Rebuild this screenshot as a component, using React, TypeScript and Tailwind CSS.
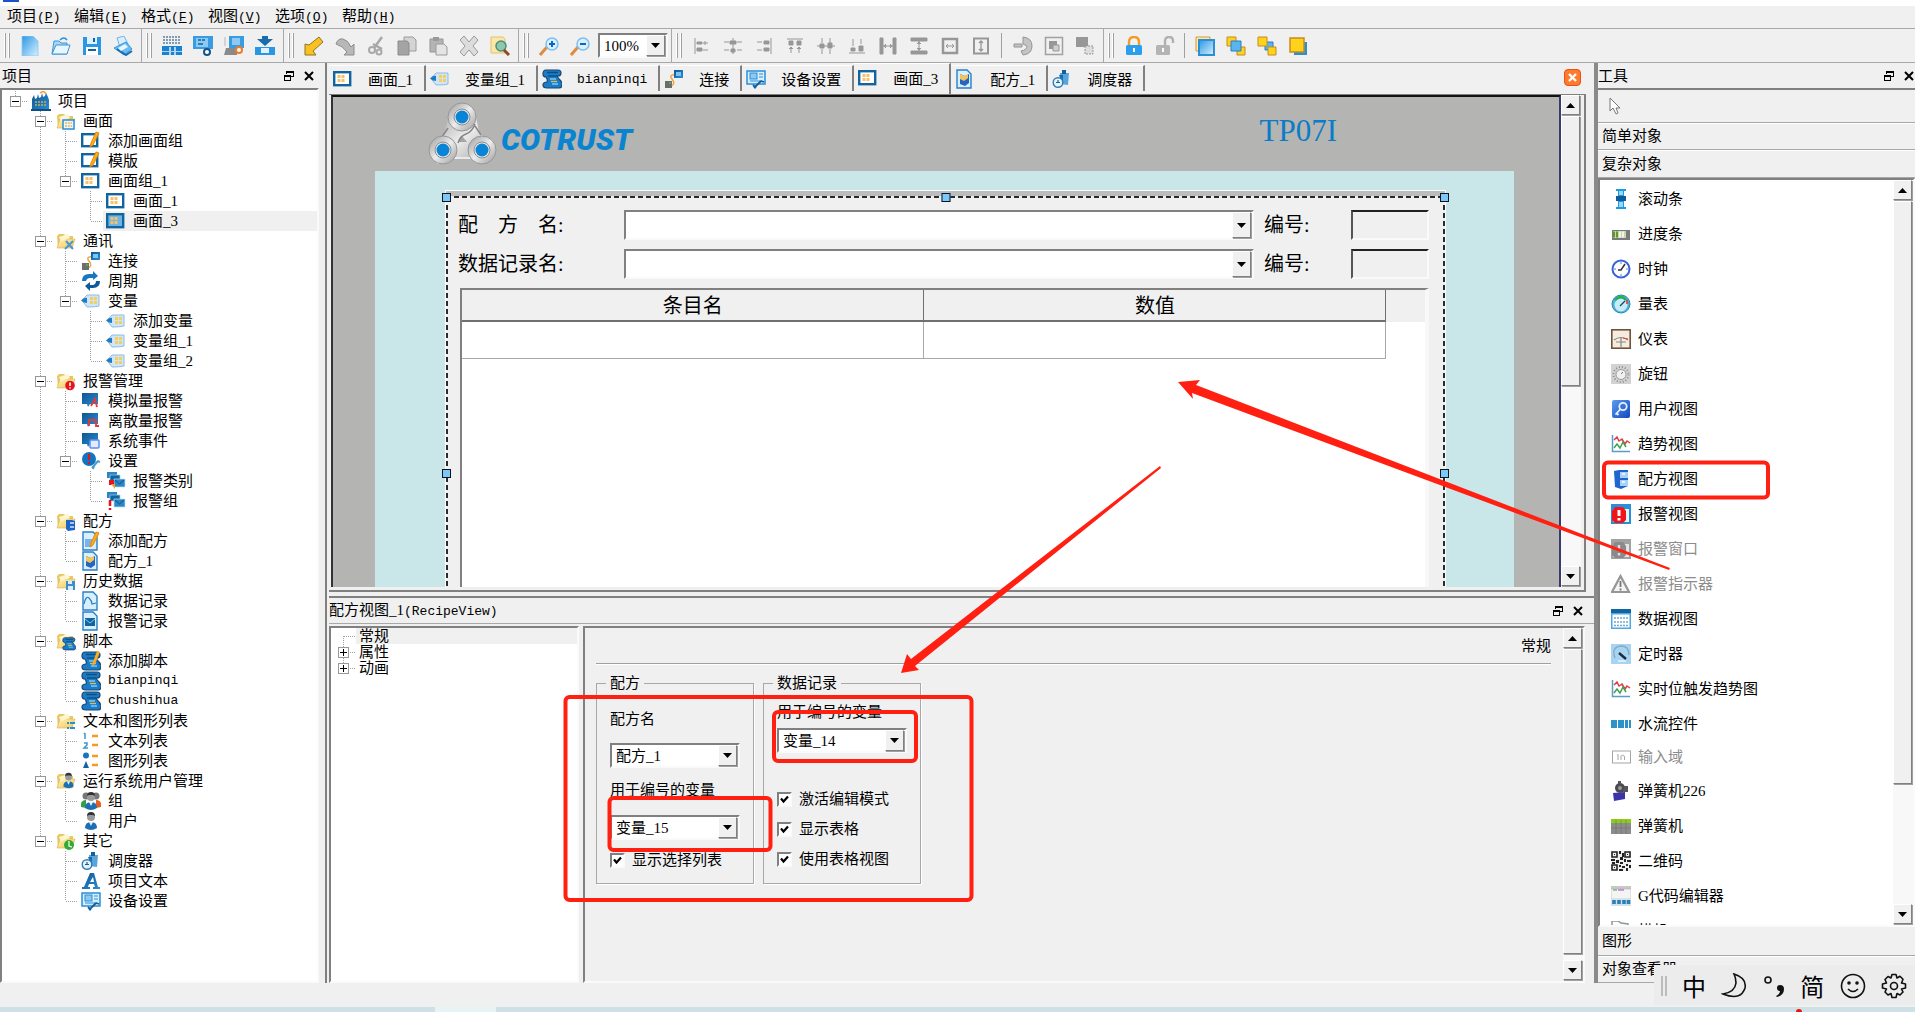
import * as React from 'react';
import clsx from 'clsx';

const RAISED = 'border border-t-white border-l-white border-r-[#808080] border-b-[#808080] bg-[#f0f0f0] shadow-[1px_1px_0_#a0a0a0]';
const SUNKEN = 'border-2 border-t-[#808080] border-l-[#808080] border-r-[#fafafa] border-b-[#fafafa]';

// Shared shapes used inside several icons
const folder = (
  <>
    <path d="M1 5 3 3h5l2 2h7v12H2z" fill="#e8c765" />
    <path d="M1 17 4 8h15l-3 9z" fill="url(#g-yellow)" stroke="#d9b455" strokeWidth=".6" />
    <path d="m3 6 9-3 2 4-9 3z" fill="#fff6cf" />
  </>
);
const pencil = <path d="m15 1 3 1-6 12-3 2 1-4z" fill="#ffab1f" stroke="#e58a00" strokeWidth="1" />;
const screen = (fill: string) => (
  <>
    <rect x="1.2" y="3.2" width="16" height="13" fill={fill} stroke="#1264a0" strokeWidth="2.4" />
    <path d="M4.5 6h3v3h-3zm4 0h3v3h-3zm-4 4h3v3h-3zm4 0h3v3h-3z" fill="#f6c167" />
  </>
);
const page = <path d="M2 1h10l4 4v14H2z" fill="#d8efff" stroke="#2a7fc4" strokeWidth="1.4" />;
const scroll = (
  <>
    <path d="M4 1h12q3 0 3 3t-3 3h-1q1 2 3 4 2 2 2 5 0 3-3 3H5q-4 0-4-3t4-3q1-2-1-5-3 0-3-3 0-4 3-4z" fill="#1a7cc8" stroke="#17466e" strokeWidth="1.2" />
    <path d="M5 3.500h11M6 7h9" stroke="#0f4f80" strokeWidth="1.400" />
    <path d="M8 10h6M10 15h6" stroke="#7fc6f2" strokeWidth="1.300" />
    <path d="M9 12.500h6" stroke="#e0bd52" strokeWidth="1.300" />
  </>
);
const monitor = <path d="M1 2h16v11H9l-2 3-1-3H1z" fill="url(#g-dark)" />;
const person = (
  <>
    <circle cx="10" cy="6" r="4" fill="#9a9a9a" />
    <path d="M6 5q0-4 4-4t4 4l-2-1H8z" fill="#333" />
    <path d="M4 17q0-6 6-6t6 6q-6 4-12 0" fill="#1b70b5" />
    <path d="m8 11 2 4 2-4z" fill="#eee" />
  </>
);
const cards = (
  <>
    <path d="M1 1h10v6H1z" fill="#2b86c6" />
    <path d="M4 4h10v6H4z" fill="#1264a0" stroke="#9fd0f0" strokeWidth=".7" />
    <path d="M8 8h11v8H8z" fill="#2b86c6" stroke="#bfe0f6" strokeWidth=".7" />
    <path d="m9 9 4.500 4L18 9" stroke="#0e4f85" fill="none" />
  </>
);
const trend = (
  <>
    <path d="M1.500 1v16.500H19" stroke="#5a9cc4" strokeWidth="1.500" fill="none" />
    <path d="m3 6 3-3 2 4 3-2 3 5 2-3 3 2" stroke="#e63946" strokeWidth="1.500" fill="none" />
    <path d="m3 14 3-4 3 4 3-6 3 5" stroke="#3fa34d" strokeWidth="1.500" fill="none" />
  </>
);

const ICONS: Record<string, React.ReactNode> = {
  factory: (
    <>
      <path d="M1 19V8l2-4 1 4 2-1 1-4 1 4 2-1 1-4 1 4 2-1 1-3 2 4 1 3v11z" fill="url(#g-dark)" />
      <path d="M9 2q4-3 6 1" stroke="#f29a38" strokeWidth="1.500" fill="none" />
      <path d="M4 11h12M4 14h12" stroke="#c9a95a" strokeWidth="1.500" strokeDasharray="2 1" />
      <path d="M0 18h20v2H0z" fill="#0f4f80" />
    </>
  ),
  folderScreen: (<>{folder}<rect x="7" y="9" width="11" height="9" fill="#eaf6ff" stroke="#2a8fd6" strokeWidth="1.500" /><path d="M9 12h7M9 15h7" stroke="#f0b84e" strokeDasharray="2 .8" strokeWidth="1.500" /></>),
  folderTools: (<>{folder}<path d="m9 18 8-8M10 10l7 8" stroke="#4a97cf" strokeWidth="2" /></>),
  folderAlarm: (<>{folder}<circle cx="14" cy="14.500" r="4.800" fill="#e8131b" /><path d="M14 11.500v3.500M14 16.300v1.200" stroke="#fff" strokeWidth="1.600" /></>),
  folderRecipe: (<>{folder}<path d="M10 9h6l3 1v9l-7 1-2-2z" fill="#1d64c8" /><path d="M14 12h4M14 16h4" stroke="#cfe6ff" strokeWidth="1.500" /></>),
  folderSave: (<>{folder}<path d="M10 10h9v9h-9z" fill="#3b8fd0" /><path d="M12 10h4v3h-4zM12 15h5v4h-5z" fill="#dceefb" /></>),
  folderScript: (<>{folder}<g transform="translate(6 6) scale(.68)">{scroll}</g></>),
  folderList: (<>{folder}<path d="M11 12h2M14 12h5M11 17h2M14 17h5" stroke="#2a8fd6" strokeWidth="1.800" /></>),
  folderUser: (<>{folder}<g transform="translate(4 1) scale(.85)">{person}</g></>),
  folderOther: (<>{folder}<circle cx="13" cy="14" r="5" fill="#34a934" /><path d="M13 10v5l3 1" stroke="#fff" strokeWidth="1.200" fill="none" /></>),
  screenEdit: (<><rect x="1.200" y="3.200" width="15" height="12" fill="#fff" stroke="#1264a0" strokeWidth="2.400" />{pencil}</>),
  screen: screen('#fff'),
  screenActive: screen('#6fb4e6'),
  connect: (
    <>
      <path d="M13 6Q4 5 8 10t-1 7" stroke="#f0a640" strokeWidth="1.500" fill="none" />
      <rect x="10" y="1" width="9" height="8" fill="url(#g-dark)" />
      <rect x="12" y="3" width="5" height="4" fill="#7cc4f2" />
      <rect x="1" y="12" width="7" height="7" fill="#6d6d6d" />
      <path d="M5 14h2" stroke="#4be04b" />
    </>
  ),
  cycle: (
    <>
      <path d="M1 10q0-7 7-7h4V0l5 5-5 4V7H9q-3 0-4 3z" fill="#1a77be" />
      <path d="M19 10q0 7-7 7H9v3l-5-5 5-4v3h3q3-1 3-4z" fill="#0f5a98" />
    </>
  ),
  tag: (
    <>
      <path d="M1 9.500 6 4h12v11q-3 1-12 1z" fill="#cfe5fa" stroke="#8fbbe2" />
      <path d="M0 9.500Q3 6 6 7v5Q3 12 0 9.500z" fill="#1f7dc6" />
      <path d="M9 6h3v3H9zm4 0h3v3h-3zm-4 4h3v3H9zm4 0h3v3h-3z" fill="#f3cf5c" />
    </>
  ),
  alarmAnalog: (<>{monitor}<path d="m10 15 4-7 2 8" stroke="#e23a3a" strokeWidth="1.800" fill="none" /></>),
  alarmDiscrete: (<>{monitor}<path d="M8 15V9h7v6h3" stroke="#e23a3a" strokeWidth="1.800" fill="none" /></>),
  sysEvent: (<>{monitor}<rect x="9" y="9" width="9" height="8" rx="1" fill="#e2ecff" stroke="#5d8df0" strokeWidth="1.500" /></>),
  alarmSettings: (
    <>
      <circle cx="8" cy="8" r="7" fill="#1473bd" />
      <path d="M8 3v6M8 11v2" stroke="#e8131b" strokeWidth="2" />
      <path d="m11 17 6-7m-5 8 1-3m3-5 3 1" stroke="#4a9bd0" strokeWidth="2" />
    </>
  ),
  alarmClass: (<>{cards}<path d="M3 9h5v5H3z" fill="#e8131b" /><path d="M5 13h4v5z" fill="#f0a030" /></>),
  alarmGroup: (<>{cards}<path d="M4 9v6M4 17v2" stroke="#e8131b" strokeWidth="2.500" /></>),
  recipeEdit: (<>{page}<path d="M4 8h7v8H4z" fill="#7cb2e8" />{pencil}</>),
  recipe: (<>{page}<path d="m5 5 5 2 4-2v9l-4 3-5-2z" fill="#2764c4" /><path d="m5 5 5 2 3-2v4l-4 3-4-2z" fill="#f0c659" /></>),
  dataLog: (<>{page}<path d="M3 13q2-9 5-6t3 6l4-1" stroke="#2a7fc4" fill="none" strokeWidth="1.200" /></>),
  alarmLog: (<>{page}<path d="M4 7h10v8H4z" fill="#1264a0" /><path d="m4 8 5 4 5-4" stroke="#7fc6f2" fill="none" /></>),
  script: scroll,
  scriptEdit: (<>{scroll}<path d="m16 0 3 1-5 12-3 2 1-4z" fill="#ffab1f" /></>),
  textList: (
    <>
      <path d="M4 2v6M3 3l1-1M3 12h3v2l-3 3h4" stroke="#3a96d8" strokeWidth="1.500" fill="none" />
      <path d="M11 5h6M11 14h6" stroke="#f59a22" strokeWidth="2.400" />
    </>
  ),
  graphicList: (
    <>
      <circle cx="5" cy="4.500" r="3" fill="#1973bd" />
      <path d="m5 10 3 7H2z" fill="#1264a0" />
      <path d="M11 5h6M11 14h6" stroke="#f59a22" strokeWidth="2.400" />
    </>
  ),
  group: (
    <>
      <path d="M20 16q1-7-5-7v8z" fill="#e8601c" />
      <path d="M0 16q-1-7 5-7v8z" fill="#33a047" />
      <circle cx="5" cy="5" r="3.500" fill="#777" />
      <circle cx="15" cy="5" r="3.500" fill="#777" />
      {person}
    </>
  ),
  user: person,
  scheduler: (
    <>
      <path d="M8 4h9l-1 12-8-1z" fill="#57a5da" />
      <path d="M10 1h4v4h-4z" fill="#155e98" />
      <path d="M7 6h4v10z" fill="#1a6cad" />
      <circle cx="6" cy="13.500" r="4.800" fill="#e6f3fb" stroke="#2d7db6" strokeWidth="1.400" />
      <path d="M4 13.500h4M6 11v3" stroke="#155e98" strokeWidth="1.200" />
    </>
  ),
  letter: (
    <path d="M1 18v-2h2L9 2h4l4 14h2v2h-7v-2h2l-1-3H8l-1 3h2v2zM9 11h4l-1-5z" fill="url(#g-dark)" fillRule="evenodd" />
  ),
  device: (
    <>
      <rect x="1" y="2" width="18" height="13" fill="#d8eefc" stroke="#2a8fd6" strokeWidth="1.500" />
      <rect x="4" y="4" width="7" height="6" fill="#8cc8f0" stroke="#2a8fd6" />
      <path d="M13 5h4M13 8h4M4 12h12" stroke="#2a8fd6" strokeWidth="1.200" />
      <path d="m8 19 7-7m0 0 3 1M7 16l3 3" stroke="#135e9c" strokeWidth="1.800" />
    </>
  ),
  slider: (<><path d="M5 0h10v2h-2v6h2v4h-2v6h2v2H5v-2h2v-6H5V8h2V2H5z" fill="#1c9be0" /><path d="M5 7h10v5H5z" fill="#0f5a98" /><path d="M8 2h4v4H8zM8 13h4v5H8z" fill="#9ad6f8" /></>),
  progress: (<><rect x="1" y="6" width="18" height="10" fill="#7a7a7a" /><rect x="2" y="7" width="13" height="7" fill="#c9d3b8" /><path d="M3 7.500v6M6 7.500v6" stroke="#57a01e" strokeWidth="2" /><path d="M9 7.500v6M12 7.500v6" stroke="#f4f4e4" strokeWidth="2" /></>),
  clock: (<><circle cx="10" cy="10" r="8.500" fill="#fff" stroke="#3a63d8" strokeWidth="2" /><path d="m14 5-4 6H7" stroke="#333" strokeWidth="1.500" fill="none" /><path d="M10 3v2M10 15v2M3 10h2M15 10h2" stroke="#3a8fe8" /></>),
  gauge: (<><circle cx="10" cy="10" r="9" fill="#4fb4dc" stroke="#2a86ae" /><circle cx="10" cy="11" r="6.500" fill="#c6ecf8" /><path d="M4 6q6-6 11 0" stroke="#23b14d" strokeWidth="2.400" fill="none" /><path d="M16 6v4" stroke="#e23a3a" strokeWidth="1.600" /><path d="m9 12 5-5" stroke="#1b4f7a" strokeWidth="1.500" /></>),
  meter: (<><rect x=".8" y=".8" width="18.400" height="18.400" fill="#f4ecdc" stroke="#6e5340" strokeWidth="1.600" /><path d="M3 11q7-5 14 0M5 13h10M10 9v9" stroke="#888" strokeWidth="1.200" fill="none" /><path d="m12 9 5 1" stroke="#e23a3a" /></>),
  knob: (<><path d="M0 0h20v20H0z" fill="#d2d2d2" /><circle cx="10" cy="10.500" r="7.500" fill="none" stroke="#8d8d8d" strokeWidth="2" strokeDasharray="1 2" /><circle cx="10" cy="10.500" r="5" fill="#f0f0f0" stroke="#999" /><path d="m10 10 2-2" stroke="#777" /></>),
  key: (<><rect x="1" y="1" width="18" height="18" rx="2" fill="url(#g-royal)" /><circle cx="12" cy="7.500" r="3.700" fill="none" stroke="#e6f1ff" strokeWidth="1.800" /><path d="m9.500 10-5 5.500m1.500-1 1.500 1.500" stroke="#e6f1ff" strokeWidth="1.800" /></>),
  trend,
  cabinet: (<><path d="M3 2 8 1h9v16l-7 3-6-2z" fill="#1f66cf" /><path d="M9 3h8v6H9zM9 11h8v6H9z" fill="#a9d3f6" /><path d="M11 5h3M11 13h3" stroke="#fff" strokeWidth="1.500" /></>),
  alarmView: (<><path d="M0 0h20v20H0z" fill="#2a8fd6" /><path d="M2 5h16v13H2z" fill="#e6f3fb" /><path d="M4 3h8l3 4v9l-3 3H4l-3-3V7z" fill="#f0141b" /><path d="M8 6v6M8 14v2.500" stroke="#fff" strokeWidth="3" /></>),
  alarmWindow: (<><path d="M0 0h20v20H0z" fill="#a2a2a2" /><path d="M2 5h16v13H2z" fill="#e4e4e4" /><path d="M4 3h8l3 4v9l-3 3H4l-3-3V7z" fill="#8a8a8a" /><path d="M8 6v6M8 14v2.500" stroke="#ddd" strokeWidth="2.400" /></>),
  indicator: (<><path d="M9.500 2 18 18H1z" fill="#f4f4f4" stroke="#969696" strokeWidth="2.200" /><path d="M9.500 7v6M9.500 14.500v2" stroke="#777" strokeWidth="1.800" /></>),
  grid: (<><path d="M0 0h20v20H0z" fill="#4fa8e0" /><path d="M0 0h20v4H0z" fill="#1264a0" /><path d="M1.500 5.500h17v13h-17z" fill="#fff" /><path d="M3 9h14M3 13h14M3 16.500h14" stroke="#6fa8cf" strokeWidth="1.300" strokeDasharray="2 1" /></>),
  timer: (<><path d="M0 0h20v20H0z" fill="#a8d4f4" /><path d="M4 14q-4-11 6-12 8 0 8 9" fill="none" stroke="#86a9c4" strokeWidth="1.300" /><path d="m8 9 7 6" stroke="#1c2b3a" strokeWidth="2.400" /><path d="M7 17h8" stroke="#d8ecfa" strokeWidth="2" /></>),
  flow: <path d="M0 6h6v8H0zM7 6h6v8H7zM14 6h3v8h-3zM18 6h2v8h-2z" fill="#2d92c8" />,
  input: (
    <>
      <rect x="1.500" y="4" width="18" height="12" fill="#fff" stroke="#a5a5a5" />
      <path d="M7 7v6M10 13V9q3-2 3.500 1v3" stroke="#a5a5a5" fill="none" />
    </>
  ),
  machine: (<><path d="m2 12 12-1v7l-11 2z" fill="#3a34a8" /><circle cx="9" cy="7" r="5" fill="#4a4a52" /><circle cx="9" cy="7" r="2" fill="#999" /><path d="M13 5h4v6h-5zM7 0h3v3H7z" fill="#55555c" /></>),
  spring: (<><path d="M0 5h20v13H0z" fill="#8c8c8c" /><path d="M0 3h20v4H0z" fill="#8ccc12" /><path d="M5 4v14M10 4v14M15 4v14M0 12h20" stroke="#6f6f6f" strokeWidth=".6" /></>),
  qr: (
    <>
      <path d="M0 0h20v20H0z" fill="#efefef" />
      <path d="M1 1h5v5H1zM14 1h5v5h-5zM1 14h5v5H1z" fill="none" stroke="#222" strokeWidth="1.600" />
      <path d="M3 3h1v1H3zM16 3h1v1h-1zM3 16h1v1H3zM8 0h2v3H8zM11 2h2v4h-2zM0 8h4v2H0zM5 9h3v3H5zM9 6h3v3H9zM13 8h2v3h-2zM16 9h4v2h-4zM9 11h3v2H9zM8 14h2v2H8zM11 15h3v2h-3zM15 13h2v2h-2zM18 14h2v3h-2zM15 17h2v3h-2zM8 18h4v2H8zM1 11h3v2H1z" fill="#222" />
    </>
  ),
  gcode: (<><path d="M0 0h20v3H0z" fill="#c8c8c8" /><path d="M0 3h20v10H0z" fill="#f4f4f4" stroke="#aaa" strokeWidth=".5" /><path d="M2 4h4" stroke="#38a838" /><path d="M7 4h6" stroke="#b040c0" /><path d="M0 13h20v7H0z" fill="#cfe2ee" /><path d="M3 14v4M8 14v4M13 14v4M17.500 14v4" stroke="#2a7fb6" strokeWidth="3.600" /></>),
  arm: <path d="M1 5V0h6l3 2 7 1v2" fill="none" stroke="#8c9c8c" strokeWidth="1.500" />,

  // toolbar
  new: <path d="M2 0h11l5 5v15H2z" fill="url(#g-sky)" stroke="#8cc8f0" strokeWidth=".8" />,
  open: (<><path d="M1 18 3 5h5l2 2h6v11z" fill="#a9d6f6" stroke="#3a96d8" /><path d="m1 18 4-9h14l-3 9z" fill="#e8f6ff" stroke="#3a96d8" /><path d="M9 4q4-4 7 0" stroke="#2a8fd6" fill="none" strokeWidth="1.500" /></>),
  save: (<><path d="M1 1h18v18H1z" fill="#2a97e4" /><path d="M5 1h10v7H5z" fill="#dff1ff" /><path d="M4 11h12v8H4z" fill="#fff" /><path d="M6 13h8v2H6zM11 2h2v4h-2z" fill="#1264a0" /></>),
  print: (<><path d="m4 2 7-2 4 8-8 3z" fill="#d8efff" stroke="#6ab4e8" /><path d="m1 12 12-6 6 7-8 6z" fill="#6abcf0" stroke="#3a96d8" /><path d="m4 13 9 6 6-4" stroke="#1a6cb4" strokeWidth="2" fill="none" /><path d="m5 12 7-4 3 3-7 4z" fill="#e8f6ff" /></>),
  compile: (<><path d="M1 1h18M1 4h18M1 7h18" stroke="#5f7f9a" strokeWidth="1.500" strokeDasharray="2 1" /><path d="M0 10h20v9H0z" fill="#1c82d0" /><path d="M7 11h2v8H7zM12 11h2v8h-2zM0 15h20v1H0z" fill="#a9d6f6" /></>),
  simulate: (<><path d="M0 0h20v13H0z" fill="#3a9ce0" /><path d="M3 2h12v9H3z" fill="#8ccaf4" /><path d="M5 4h3M9 4h3M5 8h5" stroke="#1264a0" strokeWidth="1.500" /><circle cx="14" cy="16" r="3" fill="#fff" stroke="#12558c" strokeWidth="2" /></>),
  simulateOff: (<><path d="M5 0h15v12H5z" fill="#3a9ce0" /><path d="M8 2h8v7H8z" fill="#8ccaf4" /><path d="M2 12h11v7H0z" fill="#8a8a8a" /><path d="M1 1v9" stroke="#b8b8b8" /><circle cx="15" cy="14" r="3" fill="#fff" stroke="#f07a28" strokeWidth="2" /></>),
  download: (<><path d="M7 0h6v3h5l-8 7-8-7h5z" fill="#1a6cad" /><path d="M0 11h20v8H0z" fill="#2a97e4" /><path d="M6 12h8v5H6z" fill="#dff1ff" /></>),
  undo: <path d="M1 8v11h11l-3-4 10-9-4-5-10 8z" fill="#fcc11c" stroke="#8a7430" />,
  redo: <path d="M19 8v11H9l3-3Q8 10 1 8q2-6 7-5 5 1 8 8z" fill="#b8b8b8" stroke="#8c8c8c" />,
  cut: (<><path d="M16 1 8 12M7 8l9 5" stroke="#a8a8a8" strokeWidth="2.500" /><circle cx="6" cy="14" r="3" fill="none" stroke="#a8a8a8" strokeWidth="2" /><circle cx="13" cy="16" r="2.500" fill="none" stroke="#a8a8a8" strokeWidth="2" /></>),
  copy: (<><path d="M7 1h9l3 3v11H7z" fill="#d4d4d4" stroke="#9a9a9a" /><path d="M1 5h9l2 2v12H1z" fill="#a4a4a4" stroke="#8c8c8c" /></>),
  paste: (<><path d="M2 3h13v13H2z" fill="#b4b4b4" stroke="#969696" /><path d="M5 1h6v4H5z" fill="#9a9a9a" /><path d="M8 8h8l3 3v8H8z" fill="#e4e4e4" stroke="#9a9a9a" /></>),
  remove: <path d="m1 4 4-4 5 6 5-6 4 4-5 6 5 6-4 4-5-6-5 6-4-4 5-6z" fill="#dcdcdc" stroke="#9a9a9a" />,
  find: (<><path d="M1 1h12l2 2v14H1z" fill="#fbe7a6" stroke="#e0c272" /><circle cx="11" cy="10" r="5" fill="#8cc8b0" stroke="#4f8f78" strokeWidth="1.500" /><path d="m14 14 5 5" stroke="#8a4b1e" strokeWidth="3" /></>),
  zoomIn: (<><path d="m1 19 7-8" stroke="#e08c3c" strokeWidth="3" /><circle cx="13" cy="8" r="6" fill="#d8f0ff" stroke="#7ac0f0" strokeWidth="1.500" /><path d="M13 5v6M10 8h6" stroke="#1264c0" strokeWidth="2" /></>),
  zoomOut: (<><path d="m1 19 7-8" stroke="#e08c3c" strokeWidth="3" /><circle cx="13" cy="8" r="6" fill="#d8f0ff" stroke="#7ac0f0" strokeWidth="1.500" /><path d="M10 8h6" stroke="#1264c0" strokeWidth="2" /></>),
  alignLeft: <path d="M3 2v16M5 6h5v2H5zM5 12h5v3H5zM11 7h5m-3-2v4M11 14h5" stroke="#979797" fill="#979797" />,
  alignCenterH: <path d="M1 6h5m8 0h5M1 14h5m8 0h5M10 2v16M7 5h6v3H7zM8 13h4v3H8z" stroke="#979797" fill="#979797" />,
  alignRight: <path d="M17 2v16M10 5h5v3h-5zM10 12h5v3h-5zM3 6h5M3 14h5" stroke="#979797" fill="#979797" />,
  alignTop: <path d="M2 3h16M4 5h4v4H4zM12 5h4v4h-4zM6 11v6m-2-4 2-2 2 2M14 11v6m-2-4 2-2 2 2" stroke="#979797" fill="#979797" />,
  alignMiddle: <path d="M1 10h18M4 8h4v4H4zM12 7h4v5h-4zM6 2v5M6 13v5M14 2v5M14 13v5" stroke="#979797" fill="#979797" />,
  alignBottom: <path d="M2 17h16M4 12h4v3H4zM12 10h4v5h-4zM6 3v7M14 3v5" stroke="#979797" fill="#979797" />,
  sameW: <path d="M2 2h3v16H2zM15 2h3v16h-3zM5 10h10M8 8l-2 2 2 2m4-4 2 2-2 2" stroke="#979797" fill="#979797" />,
  sameH: <path d="M2 2h16v3H2zM2 15h16v3H2zM10 5v10M8 8l2-2 2 2m-4 4 2 2 2-2" stroke="#979797" fill="#979797" />,
  fitW: (<><rect x="3" y="3" width="14" height="14" fill="none" stroke="#979797" strokeWidth="2.500" /><path d="M6 10h8M8 8l-2 2 2 2m4-4 2 2-2 2" stroke="#979797" fill="none" /></>),
  fitH: (<><rect x="3" y="2.500" width="14" height="15" fill="none" stroke="#979797" strokeWidth="2" /><path d="M10 5v10M8 7l2-2 2 2m-4 6 2 2 2-2" stroke="#979797" strokeWidth="1.300" fill="none" /></>),
  rotate: <path d="M1 8h8v3H1zM10 1q9 1 9 9t-9 9l-2-4q6-1 6-5l-4-2z" fill="#c4c4c4" stroke="#949494" />,
  groupObj: (<><rect x="1.500" y="1.500" width="17" height="17" fill="none" stroke="#a0a0a0" strokeWidth="1.500" /><path d="M5 5h8v8H5z" fill="#979797" /><path d="M9 9h6v6H9z" fill="#cfcfcf" stroke="#979797" /></>),
  ungroupObj: (<><path d="M1 1h12v10H1z" fill="#979797" /><path d="M10 10h8v8h-8z" fill="#ddd" stroke="#979797" strokeDasharray="2 1" /></>),
  lock: (<><path d="M5 9V6q0-5 5-5t5 5v3" stroke="#f59a22" strokeWidth="2.400" fill="none" /><rect x="2" y="9" width="16" height="10" rx="1.500" fill="#2a9ff0" /><path d="M10 12v4" stroke="#fff" strokeWidth="2" /></>),
  unlock: (<><path d="M10 9V5q0-4 4-4t4 4v2" stroke="#b0b0b0" strokeWidth="2.400" fill="none" /><rect x="1" y="9" width="14" height="10" rx="1.500" fill="#b4b4b4" /><path d="M8 12v4" stroke="#fff" strokeWidth="2" /></>),
  toFront: (<><path d="M1 1h14v14H1z" fill="#ffe9ad" stroke="#d99a2c" /><path d="M4 4h15v15H4z" fill="url(#g-sky)" stroke="#2a8fd6" strokeWidth="2" /></>),
  forward: (<><path d="M1 1h9v9H1zM11 11h8v8h-8z" fill="#ffd21c" stroke="#c98a1c" /><path d="M5 5h10v10H5z" fill="#5ab4f0" stroke="#2a7fc4" /></>),
  backward: (<><path d="M8 6h8v8H8z" fill="#5ab4f0" stroke="#2a7fc4" /><path d="M1 1h9v9H1zM11 11h8v8h-8z" fill="#ffd21c" stroke="#c98a1c" /></>),
  toBack: (<><path d="M6 6h13v13H6z" fill="#2a8fd6" /><path d="M2 2h14v14H2z" fill="#ffd21c" stroke="#c98a1c" strokeWidth="1.500" /></>),
};

function Icon({ name }: { name: string }) {
  return (
    <svg width="20" height="20" viewBox="0 0 20 20" className="shrink-0" aria-hidden="true">
      {ICONS[name]}
    </svg>
  );
}

const MENUS = [
  ['项目', 'P'],
  ['编辑', 'E'],
  ['格式', 'F'],
  ['视图', 'V'],
  ['选项', 'O'],
  ['帮助', 'H'],
];

const ALIGN_TOOLS = ['alignLeft', 'alignCenterH', 'alignRight', 'alignTop', 'alignMiddle', 'alignBottom', 'sameW', 'sameH', 'fitW', 'fitH'];

type Node = { d: number; icon: string; label: string; latin?: boolean };

const TREE: Node[] = [
  { d: 0, icon: 'factory', label: '项目' },
  { d: 1, icon: 'folderScreen', label: '画面' },
  { d: 2, icon: 'screenEdit', label: '添加画面组' },
  { d: 2, icon: 'screenEdit', label: '模版' },
  { d: 2, icon: 'screen', label: '画面组_1' },
  { d: 3, icon: 'screen', label: '画面_1' },
  { d: 3, icon: 'screenActive', label: '画面_3' },
  { d: 1, icon: 'folderTools', label: '通讯' },
  { d: 2, icon: 'connect', label: '连接' },
  { d: 2, icon: 'cycle', label: '周期' },
  { d: 2, icon: 'tag', label: '变量' },
  { d: 3, icon: 'tag', label: '添加变量' },
  { d: 3, icon: 'tag', label: '变量组_1' },
  { d: 3, icon: 'tag', label: '变量组_2' },
  { d: 1, icon: 'folderAlarm', label: '报警管理' },
  { d: 2, icon: 'alarmAnalog', label: '模拟量报警' },
  { d: 2, icon: 'alarmDiscrete', label: '离散量报警' },
  { d: 2, icon: 'sysEvent', label: '系统事件' },
  { d: 2, icon: 'alarmSettings', label: '设置' },
  { d: 3, icon: 'alarmClass', label: '报警类别' },
  { d: 3, icon: 'alarmGroup', label: '报警组' },
  { d: 1, icon: 'folderRecipe', label: '配方' },
  { d: 2, icon: 'recipeEdit', label: '添加配方' },
  { d: 2, icon: 'recipe', label: '配方_1' },
  { d: 1, icon: 'folderSave', label: '历史数据' },
  { d: 2, icon: 'dataLog', label: '数据记录' },
  { d: 2, icon: 'alarmLog', label: '报警记录' },
  { d: 1, icon: 'folderScript', label: '脚本' },
  { d: 2, icon: 'scriptEdit', label: '添加脚本' },
  { d: 2, icon: 'script', label: 'bianpinqi', latin: true },
  { d: 2, icon: 'script', label: 'chushihua', latin: true },
  { d: 1, icon: 'folderList', label: '文本和图形列表' },
  { d: 2, icon: 'textList', label: '文本列表' },
  { d: 2, icon: 'graphicList', label: '图形列表' },
  { d: 1, icon: 'folderUser', label: '运行系统用户管理' },
  { d: 2, icon: 'group', label: '组' },
  { d: 2, icon: 'user', label: '用户' },
  { d: 1, icon: 'folderOther', label: '其它' },
  { d: 2, icon: 'scheduler', label: '调度器' },
  { d: 2, icon: 'letter', label: '项目文本' },
  { d: 2, icon: 'device', label: '设备设置' },
];

const TABS = [
  { icon: 'screen', label: '画面_1' },
  { icon: 'tag', label: '变量组_1' },
  { icon: 'script', label: 'bianpinqi', latin: true },
  { icon: 'connect', label: '连接' },
  { icon: 'device', label: '设备设置' },
  { icon: 'screen', label: '画面_3', active: true },
  { icon: 'recipe', label: '配方_1' },
  { icon: 'scheduler', label: '调度器' },
];

const OBJECTS = [
  { icon: 'slider', label: '滚动条' },
  { icon: 'progress', label: '进度条' },
  { icon: 'clock', label: '时钟' },
  { icon: 'gauge', label: '量表' },
  { icon: 'meter', label: '仪表' },
  { icon: 'knob', label: '旋钮' },
  { icon: 'key', label: '用户视图' },
  { icon: 'trend', label: '趋势视图' },
  { icon: 'cabinet', label: '配方视图' },
  { icon: 'alarmView', label: '报警视图' },
  { icon: 'alarmWindow', label: '报警窗口', disabled: true },
  { icon: 'indicator', label: '报警指示器', disabled: true },
  { icon: 'grid', label: '数据视图' },
  { icon: 'timer', label: '定时器' },
  { icon: 'trend', label: '实时位触发趋势图' },
  { icon: 'flow', label: '水流控件' },
  { icon: 'input', label: '输入域', disabled: true, short: true },
  { icon: 'machine', label: '弹簧机226' },
  { icon: 'spring', label: '弹簧机' },
  { icon: 'qr', label: '二维码' },
  { icon: 'gcode', label: 'G代码编辑器' },
  { icon: 'arm', label: '横机' },
];

// True when another node at depth d follows before the branch closes
function continues(index: number, d: number) {
  for (let i = index + 1; i < TREE.length; i++) {
    if (TREE[i].d < d) return false;
    if (TREE[i].d === d) return true;
  }
  return false;
}

function Branch({ up, down, across, box }: { up?: boolean; down?: boolean; across?: boolean; box?: '-' | '+' }) {
  const dots = { stroke: '#a0a0a0', strokeDasharray: '1 1' };
  return (
    <svg width="25" height="20" className="shrink-0" shapeRendering="crispEdges" aria-hidden="true">
      {up && <path d="M12.500 0v10" {...dots} />}
      {down && <path d="M12.500 10v10" {...dots} />}
      {across && <path d="M13 10.500h12" {...dots} />}
      {box && (
        <>
          <rect x="7.500" y="5.500" width="10" height="10" fill="#fff" stroke="#989898" />
          <path d={box === '-' ? 'M9 10.500h7' : 'M9 10.500h7M12.500 7v7'} stroke="#000" />
        </>
      )}
    </svg>
  );
}

function TreeRow({ node, index }: { node: Node; index: number }) {
  const parent = (TREE[index + 1]?.d ?? 0) > node.d;
  return (
    <li className="flex h-5 items-center">
      {Array.from({ length: node.d }, (_, d) => (
        <Branch key={d} up={continues(index, d)} down={continues(index, d)} />
      ))}
      <Branch up across down={continues(index, node.d)} box={parent ? '-' : undefined} />
      <span
        className={clsx(
          'flex h-5 items-center gap-[7px] pl-[3px]',
          node.label === '画面_3' && 'flex-1 bg-[#f0f0f0]'
        )}
      >
        <Icon name={node.icon} />
        <span className={clsx('whitespace-nowrap', node.latin && 'font-["Liberation_Mono"] text-[13px]')}>{node.label}</span>
      </span>
    </li>
  );
}

function ToolButton({ name }: { name: string }) {
  return (
    <button type="button" aria-label={name} className="flex w-[31px] items-center justify-center">
      <Icon name={name} />
    </button>
  );
}

function ToolGroup({ children, last }: { children: React.ReactNode; last?: boolean }) {
  return (
    <div className={clsx('flex items-stretch pr-[3px]', !last && 'border-r border-[#a8a8a8]')}>
      <span className="my-1 mr-1 ml-1 flex gap-[2px]">
        <span className="w-[2px] border-r border-[#a0a0a0] bg-white" />
        <span className="w-[2px] border-r border-[#a0a0a0] bg-white" />
      </span>
      {children}
    </div>
  );
}

function PanelButtons() {
  return (
    <span className="flex items-center gap-2">
      <button type="button" aria-label="浮动">
        <svg width="12" height="12" viewBox="0 0 12 12" shapeRendering="crispEdges">
          <path d="M3.500 4V1.500h7v5H8M3 2h8" fill="none" stroke="#000" />
          <path d="M1.500 5.500h6v5h-6zM1 6h7" fill="none" stroke="#000" />
        </svg>
      </button>
      <button type="button" aria-label="关闭">
        <svg width="12" height="12" viewBox="0 0 12 12">
          <path d="m2 2 8 8M10 2l-8 8" stroke="#000" strokeWidth="2" />
        </svg>
      </button>
    </span>
  );
}

function Arrow({ up }: { up?: boolean }) {
  return (
    <svg width="9" height="5" viewBox="0 0 9 5" aria-hidden="true">
      <path d={up ? 'M0 5 4.500 0 9 5z' : 'M0 0h9L4.500 5z'} fill="#000" />
    </svg>
  );
}

function ScrollBar({ thumb }: { thumb: string }) {
  return (
    <div className="flex w-5 shrink-0 flex-col bg-[#f8f8f8] pr-px">
      <button type="button" aria-label="向上" className={clsx('flex h-5 shrink-0 items-center justify-center', RAISED)}>
        <Arrow up />
      </button>
      <div className="flex min-h-0 flex-1 flex-col pt-px">
        <div className={clsx(thumb, RAISED)} />
      </div>
      <button type="button" aria-label="向下" className={clsx('mb-px flex h-5 shrink-0 items-center justify-center', RAISED)}>
        <Arrow />
      </button>
    </div>
  );
}

function Combo({ id, label, value, className }: { id: string; label?: string; value?: string; className?: string }) {
  return (
    <span className={clsx('relative flex bg-white', SUNKEN, className)}>
      <select id={id} aria-label={label} className="w-full appearance-none bg-transparent pl-1 leading-5 outline-none" defaultValue={value}>
        <option>{value}</option>
      </select>
      <span className={clsx('pointer-events-none absolute inset-y-0 right-px flex w-[19px] items-center justify-center', RAISED)}>
        <Arrow />
      </span>
    </span>
  );
}

function Check({ id, label, className }: { id: string; label: string; className?: string }) {
  return (
    <label htmlFor={id} className={clsx('flex h-[18px] items-center gap-[7px] whitespace-nowrap', className)}>
      <span className="relative flex">
        <input id={id} type="checkbox" defaultChecked className={clsx('h-[15px] w-[15px] appearance-none bg-white', SUNKEN)} />
        <svg width="9" height="9" viewBox="0 0 9 9" className="pointer-events-none absolute top-[3px] left-[3px]">
          <path d="M1 3.500 3.500 6.500 8 1.500" fill="none" stroke="#000" strokeWidth="2.200" />
        </svg>
      </span>
      {label}
    </label>
  );
}

function Logo() {
  const rings = [
    [35, 15],
    [16, 48],
    [55, 48],
  ];
  return (
    <svg width="70" height="64" viewBox="0 0 70 64" aria-hidden="true">
      <path d="m22 14-5 18-13 10 6 20 25-6 25 6 6-18-14-14-4-20z" fill="url(#g-metal)" />
      <path d="m31 40 4-6 5 6z" fill="#a4a4a2" />
      <path d="M26 57h19l3 7H23z" fill="#b4b4b2" />
      <path d="M26 56h19" stroke="#f4f4f4" strokeWidth="1.500" />
      <path d="M48 22q-3 8-9 10t-8 9M48 24l6 9M21 26l-6 9" stroke="#858585" strokeWidth="1.500" fill="none" />
      {rings.map(([x, y]) => (
        <g key={`${x}-${y}`}>
          <circle cx={x} cy={y} r="14" fill="url(#g-metal)" stroke="#979797" />
          <circle cx={x} cy={y} r="8" fill="#e8e8e8" stroke="#8d8d8d" />
          <circle cx={x} cy={y} r="6.500" fill="#0a84d6" />
        </g>
      ))}
    </svg>
  );
}

function Handle({ className }: { className: string }) {
  return <span className={clsx('absolute h-[9px] w-[9px] border border-[#0b1520] bg-[#7cc8fa]', className)} />;
}

function RecipeRow({ id, label }: { id: string; label: string }) {
  return (
    <div className="flex h-[30px] items-center">
      <label htmlFor={id} className="w-[166px] shrink-0 whitespace-pre">
        {label}
      </label>
      <Combo id={id} className="h-full flex-1" />
      <label htmlFor={`${id}-no`} className="w-[97px] shrink-0 pl-[10px]">
        编号:
      </label>
      <input
        id={`${id}-no`}
        className="h-full w-[78px] border-2 border-t-[#222] border-r-[#fafafa] border-b-[#fafafa] border-l-[#555] bg-transparent"
      />
    </div>
  );
}

function Canvas() {
  return (
    <div className="flex min-w-0 flex-1 flex-col overflow-hidden bg-[#b4b4b2]">
      <div className="flex h-[74px] shrink-0 items-start justify-between pr-[222px] pl-[94px]">
        <div className="flex items-start pt-[5px]">
          <Logo />
          <span className="pt-[22px] pl-1 font-['Roboto'] text-[30px] leading-8 font-black text-[#0a84d0] italic">COTRUST</span>
        </div>
        <span className="pt-[18px] text-[31px] leading-8 text-[#0a7cc8]">TP07I</span>
      </div>
      <div className="mr-[45px] ml-[42px] flex flex-1 flex-col bg-[#c9e6e9] pt-[19px] pr-[68px] pl-[70px]">
        <div className="relative flex flex-1 flex-col border-x border-t border-white bg-[#f0f0f0]">
          <div className="h-[5px] bg-[#bdbdbd]" />
          <div className="h-[2px] bg-[repeating-linear-gradient(90deg,#2b2b2b_0_5px,#f0f0f0_5px_8px)]" />
          <span className="absolute top-[6px] bottom-0 left-0 w-[2px] bg-[repeating-linear-gradient(180deg,#2b2b2b_0_5px,#f0f0f0_5px_8px)]" />
          <span className="absolute top-[6px] right-0 bottom-0 w-[2px] bg-[repeating-linear-gradient(180deg,#2b2b2b_0_5px,#f0f0f0_5px_8px)]" />
          <Handle className="top-[2px] -left-1" />
          <Handle className="top-[2px] left-1/2 -translate-x-1/2" />
          <Handle className="top-[2px] -right-1" />
          <Handle className="top-[278px] -left-1" />
          <Handle className="top-[278px] -right-1" />
          <div className="flex flex-1 flex-col gap-[9px] pt-3 pr-[16px] pl-3 text-[20px]">
            <RecipeRow id="recipe" label={'配\u3000方\u3000名:'} />
            <RecipeRow id="record" label="数据记录名:" />
            <div className="ml-[2px] flex-1 border-t-2 border-r-4 border-l-2 border-t-[#808080] border-r-[#f8f8f8] border-l-[#808080] bg-white">
              <div className="bg-[#f0f0f0]">
                <table className="w-[96%] table-fixed border-collapse bg-white">
                  <thead>
                    <tr className="h-[31px] bg-[#f0f0f0] leading-6">
                      <th className="border-r border-b-2 border-[#707070] pt-[2px] pb-0 font-normal">条目名</th>
                      <th className="border-r border-b-2 border-[#707070] pt-[2px] pb-0 font-normal">数值</th>
                    </tr>
                  </thead>
                </table>
              </div>
              <table className="w-[96%] table-fixed border-collapse">
                <tbody>
                  <tr className="h-[36px]">
                    <td className="border-r border-b border-[#a8a8a8]" />
                    <td className="border-r border-b border-[#a8a8a8]" />
                  </tr>
                </tbody>
              </table>
            </div>
          </div>
        </div>
      </div>
    </div>
  );
}

function PropertyPanel() {
  return (
    <section className="flex h-[391px] shrink-0 flex-col pt-1">
      <header className="flex h-[28px] shrink-0 items-center justify-between border-t-2 border-b border-t-[#808080] border-b-[#a8a8a8] pr-[10px]">
        <h2>
          配方视图_1<span className="font-['Liberation_Mono'] text-[13px]">(RecipeView)</span>
        </h2>
        <PanelButtons />
      </header>
      <div className="flex min-h-0 flex-1 gap-1 pt-[2px] pr-[9px]">
        <ul className={clsx('w-[250px] shrink-0 bg-white leading-4', SUNKEN)}>
          {['常规', '属性', '动画'].map((item, i) => (
            <li key={item} className="flex h-4 items-center">
              <Branch up={i > 0} down={i < 2} across box={i ? '+' : undefined} />
              <span className={clsx('h-4 pl-[3px]', i === 0 && 'flex-1 bg-[#f0f0f0]')}>{item}</span>
            </li>
          ))}
        </ul>
        <div className={clsx('flex min-w-0 flex-1', SUNKEN)}>
          <div className="flex-1 pr-3 pl-[11px]">
            <h3 className="flex h-[36px] items-center justify-end border-b border-[#a0a0a0] shadow-[0_1px_0_#fff]">常规</h3>
            <div className="mt-[10px] flex gap-[9px] leading-[18px]">
              <fieldset className="flex h-[210px] w-[158px] flex-col border border-[#a8a8a8] pl-[13px] shadow-[1px_1px_0_#fff]">
                <legend className="-ml-1 h-[18px] px-1">配方</legend>
                <label htmlFor="recipe-name" className="mt-[18px]">
                  配方名
                </label>
                <Combo id="recipe-name" value="配方_1" className="mt-[15px] h-[25px] w-[130px]" />
                <label htmlFor="recipe-var" className="mt-[13px]">
                  用于编号的变量
                </label>
                <Combo id="recipe-var" value="变量_15" className="mt-[16px] h-[25px] w-[130px]" />
                <Check id="show-list" label="显示选择列表" className="mt-[11px]" />
              </fieldset>
              <fieldset className="flex h-[210px] w-[158px] flex-col border border-[#a8a8a8] pl-[13px] shadow-[1px_1px_0_#fff]">
                <legend className="-ml-1 h-[18px] px-1">数据记录</legend>
                <label htmlFor="record-var" className="mt-[11px]">
                  用于编号的变量
                </label>
                <Combo id="record-var" value="变量_14" className="mt-[7px] h-[25px] w-[130px]" />
                <Check id="edit-mode" label="激活编辑模式" className="mt-[37px]" />
                <Check id="show-table" label="显示表格" className="mt-[12px]" />
                <Check id="use-table" label="使用表格视图" className="mt-[12px]" />
              </fieldset>
            </div>
          </div>
          <ScrollBar thumb="h-[98%]" />
        </div>
      </div>
    </section>
  );
}

function ToolPanel() {
  return (
    <aside className="flex w-[321px] shrink-0 flex-col border-l-4 border-[#8a8a8a]">
      <header className="flex h-[25px] shrink-0 items-center justify-between">
        <h2>工具</h2>
        <PanelButtons />
      </header>
      <div className="flex min-h-0 flex-1 flex-col border-t-2 border-[#808080]">
        <button type="button" aria-label="选择" className="flex h-[33px] shrink-0 items-center border-b border-[#a8a8a8] pl-[11px]">
          <svg width="12" height="18" viewBox="0 0 12 18">
            <path d="M1 1v13l3-3 3 6 2-1-2-5h4z" fill="#fff" stroke="#777" />
          </svg>
        </button>
        <button type="button" className="h-[27px] shrink-0 border-b border-[#a8a8a8] pl-1 text-left shadow-[inset_0_1px_0_#fff]">
          简单对象
        </button>
        <button type="button" className="h-[28px] shrink-0 border-b border-[#a8a8a8] pl-1 text-left shadow-[inset_0_1px_0_#fff]">
          复杂对象
        </button>
        <div className={clsx('flex min-h-0 flex-1 bg-white', SUNKEN)}>
          <ul className="flex-1 overflow-hidden pt-px">
            {OBJECTS.map((item) => (
              <li
                key={item.label}
                className={clsx(
                  'flex items-center gap-[7px] pl-[11px]',
                  item.short ? 'h-8' : 'h-[35px]',
                  item.disabled && 'text-[#8c8c8c]'
                )}
              >
                <Icon name={item.icon} />
                {item.label}
              </li>
            ))}
          </ul>
          <ScrollBar thumb="h-[83%]" />
        </div>
        <button type="button" className="h-[29px] shrink-0 border-b border-[#a8a8a8] pl-1 text-left">
          图形
        </button>
        <button type="button" className="h-[27px] shrink-0 border-b border-[#a8a8a8] pl-1 text-left shadow-[inset_0_1px_0_#fff]">
          对象查看器
        </button>
      </div>
    </aside>
  );
}

// Floating input method bar in the corner of the desktop
function ImeBar() {
  return (
    <div className="absolute right-0 bottom-[7px] flex h-10 w-[261px] items-center bg-[#ececec] pt-[2px] pl-[7px] font-['Noto_Sans_CJK_SC'] text-[24px] leading-8">
      <span className="h-5 w-[6px] border-x-2 border-[#bcbcbc]" />
      <div className="flex flex-1 items-center justify-between pr-2 pl-[15px]">
        <span>中</span>
        <svg width="26" height="26" viewBox="0 0 26 26" fill="none" stroke="#111" strokeWidth="1.600">
          <path d="M13 1q13 4 11 14Q20 28 2 21 14 19 15 10q0-5-2-9z" />
        </svg>
        <svg width="22" height="26" viewBox="0 0 22 26">
          <circle cx="5" cy="7" r="3" fill="none" stroke="#111" strokeWidth="1.600" />
          <path d="M13 23q4-2 4-5-3 0-3-3t3-3q4 0 4 4 0 6-7 8z" fill="#111" />
        </svg>
        <span>简</span>
        <svg width="26" height="26" viewBox="0 0 26 26" fill="none" stroke="#111" strokeWidth="1.600">
          <circle cx="13" cy="13" r="11.500" />
          <path d="M8 16q5 5 10 0" />
          <circle cx="9" cy="10" r="1" fill="#111" />
          <circle cx="17" cy="10" r="1" fill="#111" />
        </svg>
        <svg width="26" height="26" viewBox="0 0 26 26" fill="none" stroke="#111" strokeWidth="1.600">
          <path d="M11 1.500h4l1 3.500 3-1.700 3 3L20.500 10l4 1v4l-4 1 1.500 3-3 3-3-1.500-1 4h-4l-1-4L7 22l-3-3 1.500-3-4-1v-4l4-1L4 6.500l3-3L10 5z" strokeLinejoin="round" />
          <circle cx="13" cy="13" r="3.500" />
        </svg>
      </div>
    </div>
  );
}

function Markup() {
  return (
    <svg className="pointer-events-none absolute top-0 left-0 h-full w-full" aria-hidden="true">
      <g fill="none" stroke="#ff2012" strokeWidth="4">
        <rect x="565.500" y="697" width="406" height="203" rx="4" />
        <rect x="774" y="712" width="142" height="49" rx="4" />
        <rect x="609.500" y="798" width="161" height="52" rx="4" />
        <rect x="1604" y="462.500" width="164" height="35" rx="4" />
      </g>
      <g fill="#ff2012">
        <path d="M901 673 907 654 911 659 1160 466 1161 468 915 666 919 670z" />
        <path d="M1178 382 1200 380 1196 385 1670 568 1669 570 1192 393 1193 399z" />
      </g>
      <circle cx="1799" cy="1012" r="3" fill="#f01010" />
    </svg>
  );
}

export default function App() {
  return (
    <div className="relative flex h-screen flex-col overflow-hidden bg-[#f0f0f0] font-['Liberation_Serif','Noto_Sans_CJK_SC',serif] text-[15px] leading-5 text-black">
      <svg width="0" height="0" className="absolute" aria-hidden="true">
        <defs>
          <linearGradient id="g-yellow" x2="1" y2="1"><stop stopColor="#fff0b4" /><stop offset="1" stopColor="#f0c95c" /></linearGradient>
          <linearGradient id="g-dark" x2="1" y2="1"><stop stopColor="#0f5591" /><stop offset="1" stopColor="#2a8fd6" /></linearGradient>
          <linearGradient id="g-sky" x2="1" y2="1"><stop stopColor="#2a97e4" /><stop offset="1" stopColor="#d8f0ff" /></linearGradient>
          <linearGradient id="g-royal" x2="1" y2="1"><stop stopColor="#5a9cf0" /><stop offset="1" stopColor="#1446c0" /></linearGradient>
          <linearGradient id="g-metal" x2="1" y2="1"><stop stopColor="#9a9a9a" /><stop offset=".5" stopColor="#ececec" /><stop offset="1" stopColor="#9a9a9a" /></linearGradient>
        </defs>
      </svg>

      <div className="h-[6px] shrink-0 bg-white pl-[3px]">
        <div className="h-[2px] w-4 bg-[#1c4fd0]" />
      </div>
      <nav className="flex h-[22px] shrink-0 items-center pl-[7px]">
        {MENUS.map(([label, key]) => (
          <button key={key} type="button" className="w-[67px] text-left whitespace-nowrap">
            {label}
            <span className="font-['Liberation_Mono'] text-[13px]">
              (<u>{key}</u>)
            </span>
          </button>
        ))}
      </nav>

      <div className="flex h-[35px] shrink-0 items-stretch border-y border-[#a8a8a8]">
        <ToolGroup>{['new', 'open', 'save', 'print'].map((n) => <ToolButton key={n} name={n} />)}</ToolGroup>
        <ToolGroup>{['compile', 'simulate', 'simulateOff', 'download'].map((n) => <ToolButton key={n} name={n} />)}</ToolGroup>
        <ToolGroup>
          {['undo', 'redo', 'cut', 'copy', 'paste', 'remove', 'find'].map((n) => <ToolButton key={n} name={n} />)}
        </ToolGroup>
        <ToolGroup>
          <ToolButton name="zoomIn" />
          <ToolButton name="zoomOut" />
          <Combo id="zoom" label="缩放" value="100%" className="my-1 ml-[3px] w-[70px]" />
        </ToolGroup>
        <ToolGroup>
          {ALIGN_TOOLS.map((n) => <ToolButton key={n} name={n} />)}
          <span className="mx-[5px] my-1 w-px bg-[#a0a0a0]" />
          {['rotate', 'groupObj', 'ungroupObj'].map((n) => <ToolButton key={n} name={n} />)}
        </ToolGroup>
        <ToolGroup last>
          <ToolButton name="lock" />
          <ToolButton name="unlock" />
          <span className="mx-1 my-1 w-px bg-[#a0a0a0]" />
          {['toFront', 'forward', 'backward', 'toBack'].map((n) => <ToolButton key={n} name={n} />)}
        </ToolGroup>
      </div>

      <div className="flex min-h-0 flex-1">
        <aside className="flex w-[325px] shrink-0 flex-col pr-[6px]">
          <header className="flex h-[25px] shrink-0 items-center justify-between pr-1 pl-[2px]">
            <h2>项目</h2>
            <PanelButtons />
          </header>
          <ul className={clsx('min-h-0 flex-1 overflow-hidden bg-white pt-px pl-px', SUNKEN)}>
            {TREE.map((node, i) => (
              <TreeRow key={i} node={node} index={i} />
            ))}
          </ul>
        </aside>

        <main className="flex min-w-0 flex-1 flex-col border-l-2 border-[#808080] pl-[2px]">
          <div className="flex h-[31px] shrink-0 items-end">
            {TABS.map((tab) => (
              <button
                key={tab.label}
                type="button"
                className={clsx(
                  'flex items-center border-t border-r-2 border-t-white border-r-[#808080] pr-[11px] pl-1 whitespace-nowrap',
                  tab.active ? 'h-[31px] pb-[3px]' : 'mb-[3px] h-[26px]'
                )}
              >
                <Icon name={tab.icon} />
                <span className={clsx('pt-[2px] pl-[15px]', tab.latin && 'font-["Liberation_Mono"] text-[13px]')}>{tab.label}</span>
              </button>
            ))}
            <span className="flex-1" />
            <button
              type="button"
              aria-label="关闭"
              className="mr-[13px] mb-2 flex h-[17px] w-[17px] items-center justify-center rounded-[4px] border border-[#e8501c] bg-[#ff7a2c]"
            >
              <svg width="9" height="9" viewBox="0 0 9 9">
                <path d="m1 1 7 7M8 1 1 8" stroke="#fff" strokeWidth="2.400" />
              </svg>
            </button>
          </div>
          <div className="mr-[8px] flex min-h-0 flex-1 border-t border-r-2 border-b-2 border-[#808080] pr-[3px] pb-[3px] pl-[2px]">
            <div className="flex min-w-0 flex-1 border-t-2 border-r-2 border-l-2 border-t-[#111] border-r-[#3b3b6b] border-l-[#333]">
              <Canvas />
            </div>
            <ScrollBar thumb="h-[60%]" />
          </div>
          <PropertyPanel />
        </main>

        <ToolPanel />
      </div>

      <div className="h-6 shrink-0" />
      <div className="flex h-[5px] shrink-0 bg-[#cde1e6] pl-[435px]">
        <span className="w-[61px] bg-[#e8f3f5]" />
      </div>
      <ImeBar />
      <Markup />
    </div>
  );
}
